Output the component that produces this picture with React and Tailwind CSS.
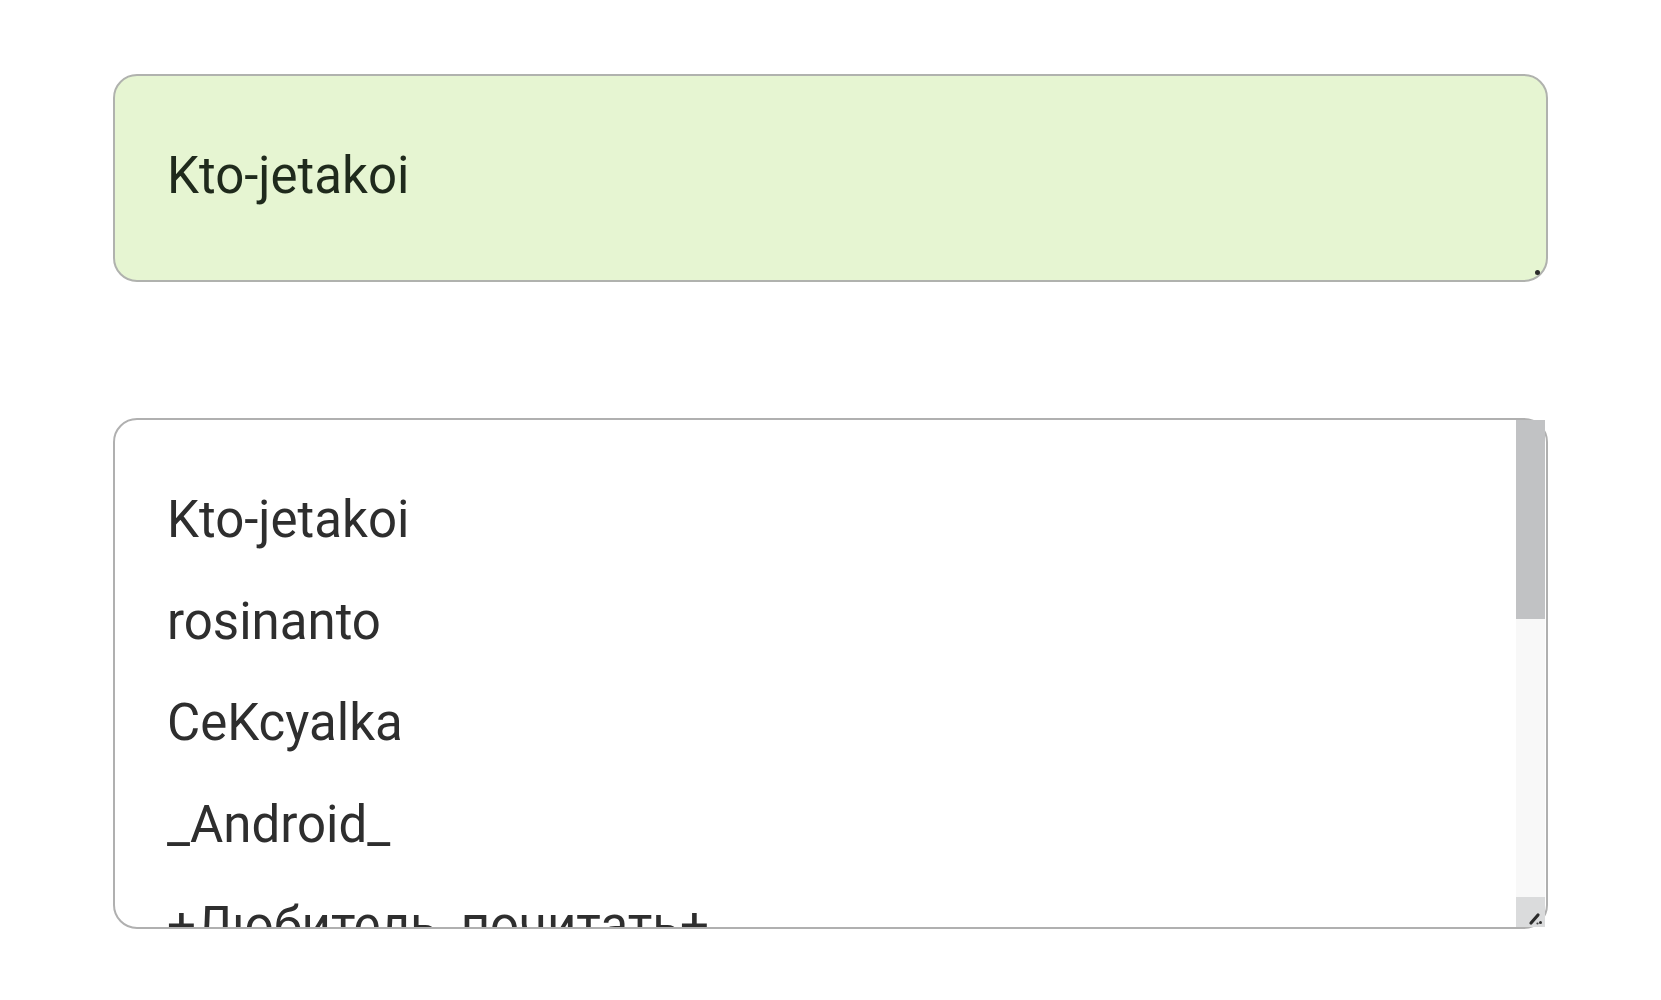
import React from 'react';

const names = ['Kto-jetakoi', 'rosinanto', 'CeKcyalka', '_Android_', '+Любитель_почитать+'];

const Resizer = () => (
    <svg width="16" height="16" viewBox="0 0 16 16">
        <path d="M3 13 L10 5" stroke="#2b2b2b" strokeWidth="3.2" strokeLinecap="round" />
        <circle cx="12.5" cy="12.5" r="1.5" fill="#2b2b2b" />
        <circle cx="9.5" cy="13.5" r="1.1" fill="#444" />
    </svg>
);

const App = () => {
    return (
        <div className="min-h-[1000px] bg-white pt-[74px] px-[113px] font-['Roboto','Noto_Sans',sans-serif]">
            {/* selected value */}
            <div className="relative h-[208px] rounded-[24px] border-2 border-[#b0b2ae] bg-[#e6f5d2] pl-[52px] pt-[71px]">
                <div className="text-[51px] leading-[58px] text-[#1f2a1c]">Kto-jetakoi</div>
                <div className="absolute right-[6px] bottom-[5px] w-[5px] h-[5px] rounded-full bg-[#2b2b2b]" />
            </div>

            {/* list */}
            <div className="mt-[136px] h-[511px] rounded-[24px] border-2 border-[#b0b0b0] bg-white flex">
                <div className="flex-1 overflow-hidden rounded-l-[22px] pl-[52px] pt-[49px]">
                    {names.map((n) => (
                        <div key={n} className="text-[51px] leading-[101.5px] text-[#2e2e2e] whitespace-nowrap">
                            {n}
                        </div>
                    ))}
                </div>
                <div className="w-[29px] mr-[1px] flex flex-col">
                    <div className="h-[199px] bg-[#c1c2c4]" />
                    <div className="flex-1 bg-[#f8f8f8]" />
                    <div className="h-[30px] bg-[#dadbdc] flex items-end justify-end pr-[1px] pb-[1px]">
                        <Resizer />
                    </div>
                </div>
            </div>
        </div>
    );
};

export default App;
